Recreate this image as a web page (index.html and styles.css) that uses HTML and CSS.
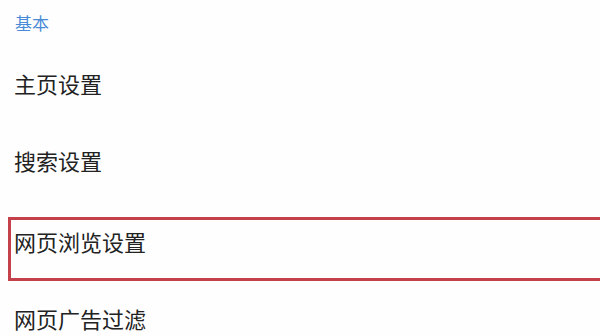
FILE: index.html
```html
<!DOCTYPE html>
<html lang="zh-CN">
<head>
    <meta charset="UTF-8">
    <meta name="viewport" content="width=device-width, initial-scale=1.0">
    <title>设置</title>
    <link rel="stylesheet" href="styles.css">
</head>
<body>

    <div class="settings">
        <div class="group-title">基本</div>

        <ul class="menu">
            <li class="menu-item">主页设置</li>
            <li class="menu-item">搜索设置</li>
            <li class="menu-item highlighted">
                网页浏览设置
                <!-- annotation box drawn over the row -->
                <span class="mark"></span>
            </li>
            <li class="menu-item">网页广告过滤</li>
        </ul>
    </div>

</body>
</html>
```

FILE: styles.css
```css
/* --- Basic Setup --- */
:root {
    --page-bg: #fefefe;
    --text-color: #222;
    --group-color: #4a8ad6;
    --mark-color: #c4404b;
}

body {
    margin: 0;
    background-color: var(--page-bg);
    color: var(--text-color);
    font-family: "Noto Sans CJK SC", "Noto Sans", sans-serif;
    overflow: hidden;
}

/* --- Layout --- */
.settings {
    width: 600px;
    height: 335px;
    overflow: hidden;
}

.group-title {
    height: 44px;
    display: flex;
    align-items: center;
    padding-left: 15px;
    font-size: 17px;
    color: var(--group-color);
}

.menu {
    list-style: none;
    margin: 0;
    padding: 0;
}

.menu-item {
    position: relative;
    height: 77px;
    display: flex;
    align-items: center;
    padding-left: 14px;
    font-size: 22px;
}

.menu-item.highlighted {
    margin-top: 4px;
}

/* --- Red annotation box --- */
.mark {
    position: absolute;
    top: 15px;
    bottom: -2px;
    left: 8px;
    right: -30px;
    border: 3px solid var(--mark-color);
}
```
